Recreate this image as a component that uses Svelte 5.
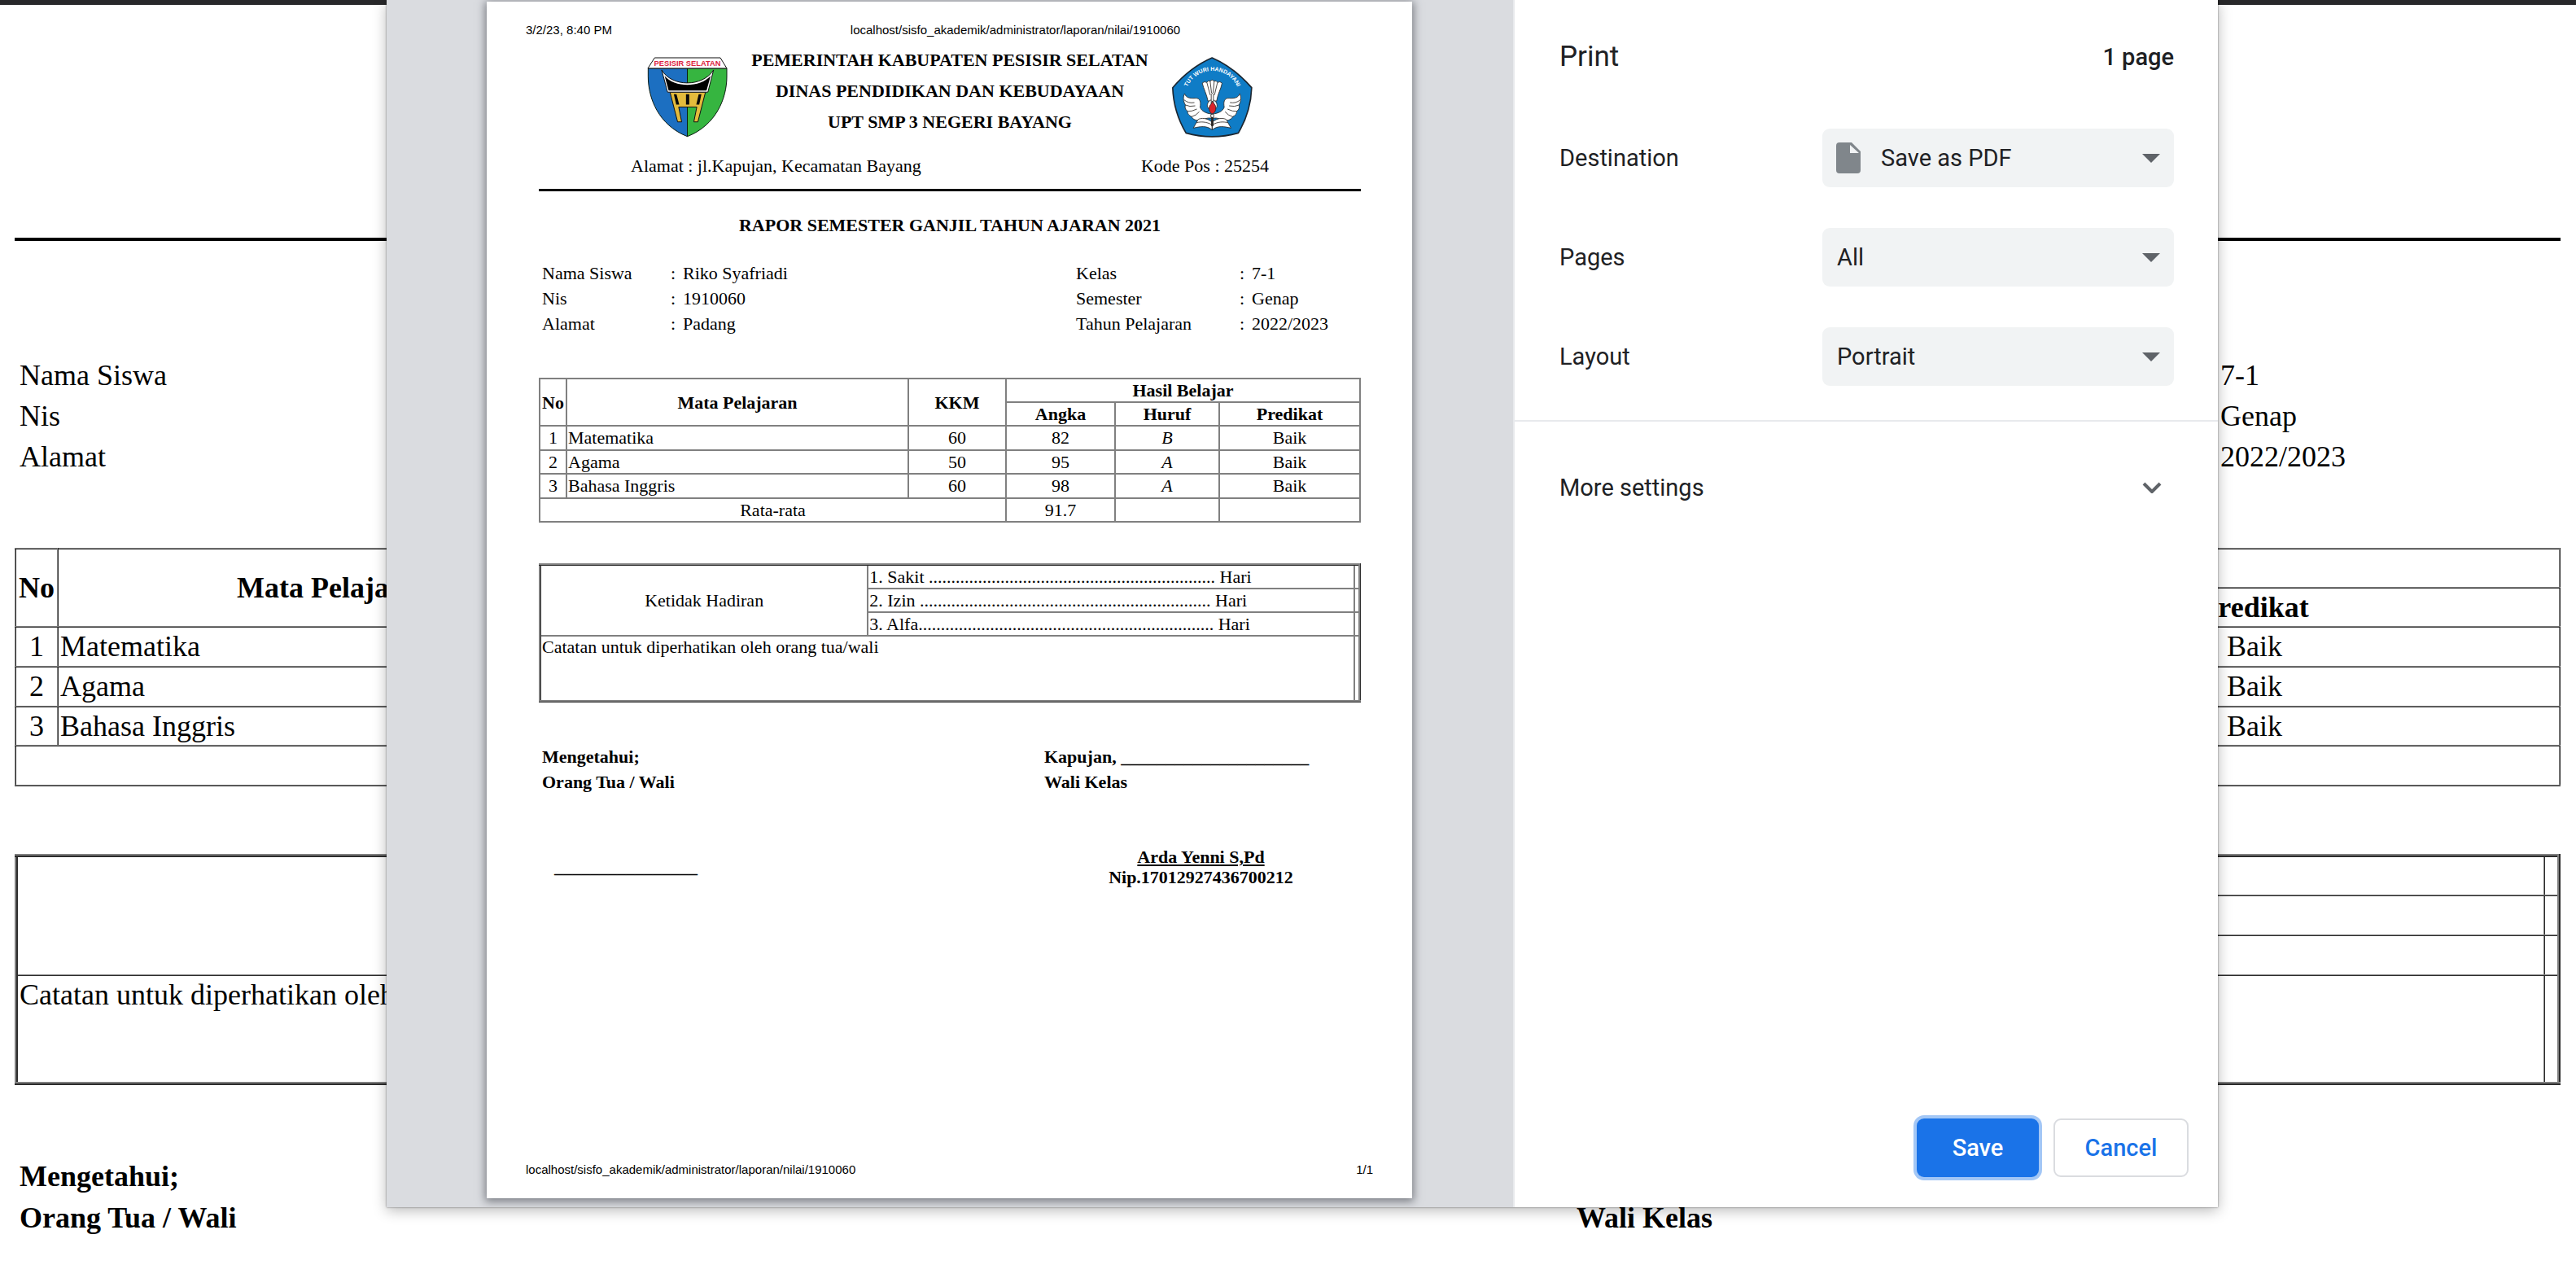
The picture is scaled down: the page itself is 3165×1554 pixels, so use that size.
<script>
  const subjects = [
    { no: 1, name: 'Matematika', kkm: 60, score: 82, letter: 'B', grade: 'Baik' },
    { no: 2, name: 'Agama', kkm: 50, score: 95, letter: 'A', grade: 'Baik' },
    { no: 3, name: 'Bahasa Inggris', kkm: 60, score: 98, letter: 'A', grade: 'Baik' }
  ];
  const student = [
    ['Nama Siswa', 'Riko Syafriadi'],
    ['Nis', '1910060'],
    ['Alamat', 'Padang']
  ];
  const term = [
    ['Kelas', '7-1'],
    ['Semester', 'Genap'],
    ['Tahun Pelajaran', '2022/2023']
  ];
  const url = 'localhost/sisfo_akademik/administrator/laporan/nilai/1910060';
  const absences = [
    '1. Sakit ' + '.'.repeat(64) + ' Hari',
    '2. Izin ' + '.'.repeat(65) + ' Hari',
    '3. Alfa' + '.'.repeat(66) + ' Hari'
  ];
</script>

{#snippet arrow()}
  <svg class="arrow" viewBox="0 0 22 11" aria-hidden="true"><path d="M0 0H22L11 11Z" /></svg>
{/snippet}

{#snippet infoList(rows, wide)}
  <dl class="info" class:wide>
    {#each rows as [label, value]}
      <dt>{label}</dt>
      <dd>:</dd>
      <dd>{value}</dd>
    {/each}
  </dl>
{/snippet}

<div class="screen">
  <main class="page">
    <hr class="page-rule" />
    <div class="page-info">
      {#each student as [label], i}
        <div class="page-info-row"><span>{label}</span><span class="page-value">{term[i][1]}</span></div>
      {/each}
    </div>

    <table class="page-grades">
      <colgroup>
        <col class="p-no" /><col class="p-subject" /><col /><col /><col /><col class="p-grade" />
      </colgroup>
      <thead>
        <tr>
          <th rowspan="2">No</th>
          <th rowspan="2">Mata Pelajaran</th>
          <th rowspan="2"></th>
          <th colspan="3"></th>
        </tr>
        <tr><th></th><th></th><th>Predikat</th></tr>
      </thead>
      <tbody>
        {#each subjects as s}
          <tr>
            <td>{s.no}</td>
            <td class="left">{s.name}</td>
            <td></td><td></td><td></td>
            <td>{s.grade}</td>
          </tr>
        {/each}
        <tr><td colspan="3"></td><td></td><td></td><td></td></tr>
      </tbody>
    </table>

    <table class="page-notes">
      <colgroup><col class="n-head" /><col /><col class="n-edge" /></colgroup>
      <tbody>
        <tr><td rowspan="3"></td><td></td><td></td></tr>
        <tr><td></td><td></td></tr>
        <tr><td></td><td></td></tr>
        <tr class="note"><td colspan="2">Catatan untuk diperhatikan oleh orang tua/wali</td><td></td></tr>
      </tbody>
    </table>

    <div class="page-sign">
      <div>Mengetahui;<br />Orang Tua / Wali</div>
      <div><br />Wali Kelas</div>
    </div>
  </main>

  <div class="overlay">
    <div class="dialog" role="dialog" aria-labelledby="print-title">
      <section class="preview">
        <article class="paper">
          <header class="running">
            <span>3/2/23, 8:40 PM</span>
            <span class="running-url">{url}</span>
          </header>

          <div class="sheet">
            <div class="letterhead">
              <svg class="logo" viewBox="44 58 298 298" aria-hidden="true">
                <path d="M48 100H193V352C86 310 48 210 48 130Z" fill="#1c6fc1" />
                <path d="M193 100H339V130C339 210 300 310 193 352Z" fill="#36b540" />
                <path d="M48 100V130C48 210 86 310 193 352C300 310 339 210 339 130V100ZM193 100V352" fill="none" stroke="#0b1a10" stroke-width="3" />
                <path d="M47 100L72 61H315L339 100Z" fill="#fff" stroke="#111" stroke-width="3" />
                <text x="193" y="90" text-anchor="middle" class="logo-name">PESISIR SELATAN</text>
                <path d="M129 188L157 298H172L161 243H228L217 298H232L260 188Z" fill="#e3bb3c" stroke="#111" stroke-width="3" />
                <path d="M143 196H153L163 234H152ZM188 196H200V234H188ZM235 196H245L237 234H226Z" fill="#080808" />
                <path d="M98 106C135 170 250 170 290 106L269 188H120Z" fill="#fff" stroke="#111" stroke-width="3" />
                <path d="M109 128C145 172 240 172 279 128L264 182H124Z" fill="#000" />
              </svg>

              <div class="titles">
                <div>PEMERINTAH KABUPATEN PESISIR SELATAN</div>
                <div>DINAS PENDIDIKAN DAN KEBUDAYAAN</div>
                <div>UPT SMP 3 NEGERI BAYANG</div>
              </div>

              <svg class="logo" viewBox="44 28 296 297" aria-hidden="true">
                <path d="M191 31Q272 66 337 141Q334 230 288 308Q191 335 95 308Q49 230 46 141Q110 66 191 31Z" fill="#0f7cc6" stroke="#1c2630" stroke-width="5" stroke-linejoin="round" />
                <path id="motto" d="M91 180A101 101 0 0 1 293 180" fill="none" />
                <text class="motto" text-anchor="middle"><textPath href="#motto" startOffset="50%">TUT WURI HANDAYANI</textPath></text>
                <g fill="#fff" stroke="#2a2522" stroke-width="2.5" stroke-linejoin="round">
                  <path d="M155 124Q163 116 172 122Q176 113 184 117Q191 108 199 117Q207 113 211 122Q220 116 228 124C224 146 212 164 208 190H176C171 164 160 146 155 124Z" />
                  <path d="M172 122L184 168M184 117L189 160M199 117L195 160M211 122L200 168" fill="none" />
                  {#each [false, true] as flip}
                    <g class:flip>
                      <path d="M90 163C95 178 108 181 128 180C149 178 150 197 147 213C152 228 170 236 188 238L188 254C175 250 160 258 148 262C132 264 118 256 116 248C106 244 100 236 101 228C92 222 90 212 93 205C84 190 84 175 90 163Z" />
                      <path d="M88 186Q104 200 126 196M93 205Q108 213 129 208M101 228Q115 230 135 220M116 248Q132 244 144 230" fill="none" />
                      <path d="M191 268C172 252 152 252 140 258L122 290C148 284 170 280 191 296Z" />
                      <path d="M191 278C170 266 150 266 134 270" fill="none" />
                      <path d="M188 186C178 190 172 200 174 212L188 230" />
                    </g>
                  {/each}
                  <path d="M188 200V165Q192 156 196 165V200Z" />
                  <path d="M192 190C196 200 206 204 205 217C204 230 198 236 192 237C186 236 181 230 180 217C180 206 190 202 192 190Z" fill="#d8232a" />
                  <circle cx="192" cy="245" r="6" />
                  <path d="M189 252H195V282H189Z" fill="#2a2522" />
                </g>
              </svg>
            </div>

            <div class="address">
              <span>Alamat : jl.Kapujan, Kecamatan Bayang</span>
              <span>Kode Pos : 25254</span>
            </div>
            <hr class="rule" />
            <h1>RAPOR SEMESTER GANJIL TAHUN AJARAN 2021</h1>

            <div class="infos">
              {@render infoList(student, false)}
              {@render infoList(term, true)}
            </div>

            <table class="grades">
              <colgroup>
                <col class="g-no" /><col /><col class="g-kkm" /><col class="g-score" /><col class="g-letter" /><col class="g-grade" />
              </colgroup>
              <thead>
                <tr>
                  <th rowspan="2">No</th>
                  <th rowspan="2">Mata Pelajaran</th>
                  <th rowspan="2">KKM</th>
                  <th colspan="3">Hasil Belajar</th>
                </tr>
                <tr><th>Angka</th><th>Huruf</th><th>Predikat</th></tr>
              </thead>
              <tbody>
                {#each subjects as s}
                  <tr>
                    <td>{s.no}</td>
                    <td class="left">{s.name}</td>
                    <td>{s.kkm}</td>
                    <td>{s.score}</td>
                    <td><i>{s.letter}</i></td>
                    <td>{s.grade}</td>
                  </tr>
                {/each}
                <tr><td colspan="3">Rata-rata</td><td>91.7</td><td></td><td></td></tr>
              </tbody>
            </table>

            <table class="notes">
              <colgroup><col class="n-head" /><col /><col class="n-edge" /></colgroup>
              <tbody>
                {#each absences as line, i}
                  <tr>
                    {#if i === 0}<td rowspan="3" class="center">Ketidak Hadiran</td>{/if}
                    <td>{line}</td>
                    <td></td>
                  </tr>
                {/each}
                <tr class="note"><td colspan="2">Catatan untuk diperhatikan oleh orang tua/wali</td><td></td></tr>
              </tbody>
            </table>

            <div class="signs">
              <div>
                <div class="sign-head">Mengetahui;<br />Orang Tua / Wali</div>
                <div class="parent">________________</div>
              </div>
              <div>
                <div class="sign-head">Kapujan, _____________________<br />Wali Kelas</div>
                <div class="teacher"><u>Arda Yenni S,Pd</u><br />Nip.17012927436700212</div>
              </div>
            </div>
          </div>

          <footer class="running bottom"><span>{url}</span><span>1/1</span></footer>
        </article>
      </section>

      <form class="sidebar" onsubmit={(e) => e.preventDefault()}>
        <div class="head">
          <h2 id="print-title">Print</h2>
          <span class="count">1 page</span>
        </div>
        <div class="settings">
          <div class="setting">
            <label for="destination">Destination</label>
            <div class="select">
              <svg class="file" viewBox="0 0 30 38" aria-hidden="true">
                <path fill-rule="evenodd" d="M4 0H19L30 11V34Q30 38 26 38H4Q0 38 0 34V4Q0 0 4 0ZM17 3V13H28Z" />
              </svg>
              <select id="destination" class="with-icon"><option>Save as PDF</option></select>
              {@render arrow()}
            </div>
          </div>
          <div class="setting">
            <label for="pages">Pages</label>
            <div class="select">
              <select id="pages"><option>All</option></select>
              {@render arrow()}
            </div>
          </div>
          <div class="setting">
            <label for="layout">Layout</label>
            <div class="select">
              <select id="layout"><option>Portrait</option></select>
              {@render arrow()}
            </div>
          </div>
        </div>
        <button type="button" class="more">
          <span>More settings</span>
          <svg viewBox="0 0 24 14" aria-hidden="true"><path d="M2 2L12 12L22 2" /></svg>
        </button>
        <div class="actions">
          <button type="submit" class="save">Save</button>
          <button type="button" class="cancel">Cancel</button>
        </div>
      </form>
    </div>
  </div>
</div>

<style>
  :global(body) {
    margin: 0;
    background: #fff;
  }
  .screen,
  .screen * {
    box-sizing: border-box;
  }
  .screen {
    position: relative;
    min-height: 100vh;
    overflow: hidden;
    color: #000;
    font-family: 'Liberation Serif', 'Times New Roman', serif;
  }
  table {
    width: 100%;
    border-collapse: collapse;
    table-layout: fixed;
    font-size: inherit;
  }
  td,
  th {
    padding: 0 1px;
    text-align: center;
  }
  hr {
    border: 0;
    background: #000;
  }
  td.left {
    text-align: left;
  }

  /* document behind the dialog */
  .page {
    padding: 286px 19px 30px 18px;
    border-top: 6px solid #28282a;
    font-size: 36px;
    line-height: 46px;
  }
  .page-rule {
    height: 4px;
    margin: 0 0 140px;
  }
  .page-info {
    padding-left: 6px;
    line-height: 50px;
  }
  .page-info-row {
    display: flex;
    justify-content: space-between;
  }
  .page-value {
    width: 418px;
  }
  .page td,
  .page th {
    padding: 0 2px;
    border: 2px inset #808080;
  }
  .page-grades {
    height: 293px;
    margin-top: 87px;
  }
  .page-grades tr {
    height: 48px;
  }
  .p-no {
    width: 52px;
  }
  .p-subject {
    width: 681px;
  }
  .p-grade {
    width: 750px;
  }
  .page-notes {
    height: 284px;
    margin-top: 83px;
    border: 4px inset #808080;
  }
  .page-notes tr {
    height: 49px;
  }
  .page-notes .note {
    height: auto;
  }
  .n-head {
    width: 40%;
  }
  .page-notes .n-edge {
    width: 18px;
  }
  .note td {
    text-align: left;
    vertical-align: top;
  }
  .page-sign {
    display: grid;
    grid-template-columns: 1913fr 1209fr;
    margin-top: 87px;
    padding-left: 6px;
    font-weight: bold;
    line-height: 51px;
  }

  /* dialog */
  .overlay {
    position: absolute;
    inset: 0;
    display: flex;
    padding: 0 440px 71px 475px;
  }
  .dialog {
    display: flex;
    flex: 1;
    background: #fff;
    box-shadow: 0 0 2px rgba(0, 0, 0, 0.5), 0 4px 16px rgba(0, 0, 0, 0.28);
  }
  .preview {
    display: flex;
    flex: 1;
    padding: 2px 124px 11px 123px;
    border-right: 2px solid #e8eaed;
    background: #dadce0;
    overflow: hidden;
  }
  .paper {
    display: flex;
    flex: 1;
    flex-direction: column;
    padding: 26px 0 27px;
    background: #fff;
    box-shadow: 0 2px 10px 2px rgba(60, 64, 72, 0.6);
    font-size: 22px;
    line-height: 25px;
  }
  .running {
    display: flex;
    padding: 0 48px;
    font: 15px/17px 'Liberation Sans', Arial, sans-serif;
  }
  .running-url {
    flex: 1;
    padding-left: 56px;
    text-align: center;
  }
  .bottom {
    justify-content: space-between;
    margin-top: auto;
  }
  .sheet {
    padding: 10px 63px 0 64px;
  }
  .letterhead {
    display: flex;
    align-items: flex-end;
    justify-content: space-between;
    padding: 0 133px;
  }
  .logo {
    width: 99px;
    height: 99px;
  }
  .logo-name {
    fill: #dd2440;
    font: bold 28px 'Liberation Sans', Arial, sans-serif;
  }
  .motto {
    fill: #fff;
    font: bold 21px 'Liberation Sans', Arial, sans-serif;
  }
  .flip {
    transform: translateX(383px) scaleX(-1);
  }
  .titles {
    font-weight: bold;
    line-height: 38px;
    text-align: center;
    white-space: nowrap;
  }
  .address {
    display: flex;
    justify-content: space-between;
    margin-top: 22px;
    padding: 0 113px;
  }
  .rule {
    height: 3px;
    margin: 16px 0 29px;
  }
  h1 {
    margin: 0;
    font-size: 22px;
    line-height: 25px;
    text-align: center;
  }
  .infos {
    display: grid;
    grid-template-columns: 1fr 350px;
    margin-top: 31px;
    padding-left: 4px;
    line-height: 31px;
  }
  .info {
    display: grid;
    grid-template-columns: 158px 15px 1fr;
    margin: 0;
  }
  .info.wide {
    grid-template-columns: 201px 15px 1fr;
  }
  dd {
    margin: 0;
  }
  .paper td,
  .paper th {
    border: 2px solid #808080;
  }
  .grades {
    height: 178px;
    margin-top: 51px;
  }
  .grades tr {
    height: 29px;
  }
  .grades th {
    padding: 0;
  }
  .g-no {
    width: 33px;
  }
  .g-kkm {
    width: 120px;
  }
  .g-score {
    width: 134px;
  }
  .g-letter {
    width: 128px;
  }
  .g-grade {
    width: 173px;
  }
  .notes {
    height: 171px;
    margin-top: 50px;
    border: 3px inset #808080;
  }
  .notes tr {
    height: 29px;
  }
  .notes .note {
    height: auto;
  }
  .notes td {
    text-align: left;
    white-space: nowrap;
  }
  .notes td.center {
    text-align: center;
  }
  .notes .n-edge {
    width: 7px;
  }
  .notes td:empty {
    padding: 0;
  }
  .signs {
    display: grid;
    grid-template-columns: 617px 1fr;
    margin-top: 51px;
    padding: 0 4px;
    font-weight: bold;
  }
  .sign-head {
    line-height: 31px;
  }
  .parent {
    margin: 76px 0 0 15px;
  }
  .teacher {
    margin-top: 64px;
    text-align: center;
  }

  /* settings */
  .sidebar {
    display: flex;
    flex-direction: column;
    width: 864px;
    color: #202124;
    font-family: Roboto, sans-serif;
    font-size: 29px;
    line-height: 34px;
  }
  .head {
    display: flex;
    align-items: center;
    justify-content: space-between;
    height: 140px;
    padding: 0 54px 0 55px;
  }
  h2 {
    margin: 0;
    font-size: 35px;
    font-weight: 400;
    line-height: 42px;
  }
  .count {
    font-weight: 500;
  }
  .settings {
    display: flex;
    flex-direction: column;
    gap: 50px;
    padding: 18px 54px 42px 55px;
    border-bottom: 2px solid #e8eaed;
  }
  .setting {
    display: grid;
    grid-template-columns: 1fr 432px;
    align-items: center;
  }
  .select {
    display: grid;
    align-items: center;
  }
  .select > * {
    grid-area: 1 / 1;
  }
  .select svg {
    z-index: 1;
    pointer-events: none;
  }
  select {
    width: 100%;
    height: 72px;
    padding: 0 60px 0 18px;
    border: 0;
    border-radius: 9px;
    background: #f1f3f4;
    color: #202124;
    font: inherit;
    appearance: none;
  }
  .with-icon {
    padding-left: 72px;
  }
  .file {
    width: 30px;
    height: 38px;
    margin-left: 17px;
    fill: #80868b;
  }
  .arrow {
    justify-self: end;
    width: 22px;
    height: 11px;
    margin-right: 17px;
    fill: #5f6368;
  }
  .more {
    display: flex;
    align-items: center;
    justify-content: space-between;
    height: 162px;
    padding: 0 69px 0 55px;
    border: 0;
    background: none;
    color: inherit;
    font: inherit;
  }
  .more svg {
    width: 24px;
    height: 14px;
    fill: none;
    stroke: #5f6368;
    stroke-width: 4;
  }
  .actions {
    display: flex;
    gap: 18px;
    justify-content: flex-end;
    margin-top: auto;
    padding: 0 36px 37px;
  }
  .actions button {
    height: 72px;
    border-radius: 9px;
    font: 500 29px/34px Roboto, sans-serif;
  }
  .save {
    width: 150px;
    border: 0;
    background: #1a73e8;
    color: #fff;
    box-shadow: 0 0 0 4px #a3c7f6;
  }
  .cancel {
    width: 166px;
    border: 2px solid #dadce0;
    background: #fff;
    color: #1a73e8;
  }
</style>
